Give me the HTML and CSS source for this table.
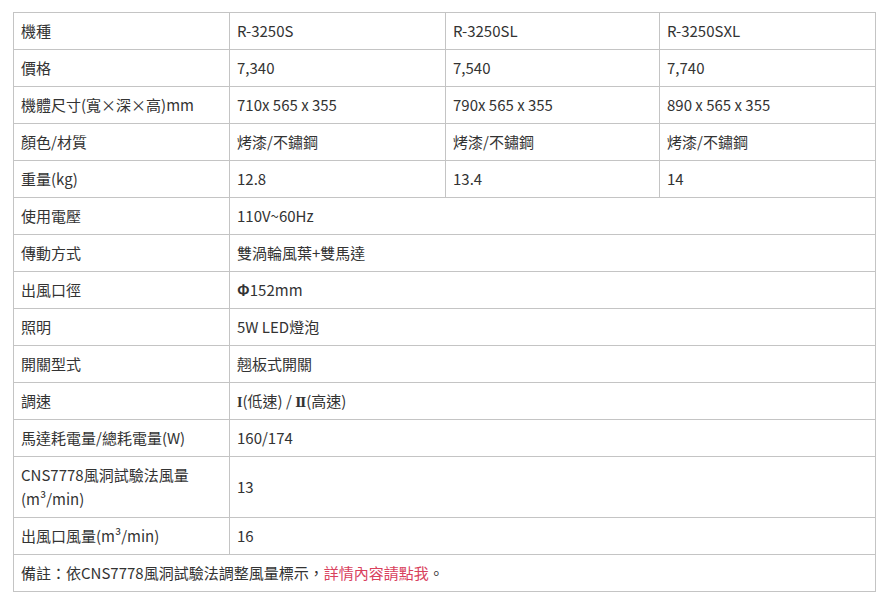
FILE: index.html
```html
<!DOCTYPE html>
<html lang="zh-Hant">
<head>
<meta charset="utf-8">
<link rel="stylesheet" href="styles.css">
</head>
<body>
<table class="spec">
  <colgroup>
    <col class="c1"><col class="c2"><col class="c3"><col class="c4">
  </colgroup>
  <tbody>
    <tr><td>機種</td><td>R-3250S</td><td>R-3250SL</td><td>R-3250SXL</td></tr>
    <tr><td>價格</td><td>7,340</td><td>7,540</td><td>7,740</td></tr>
    <tr><td>機體尺寸(寬×深×高)mm</td><td>710x 565 x 355</td><td>790x 565 x 355</td><td>890 x 565 x 355</td></tr>
    <tr><td>顏色/材質</td><td>烤漆/不鏽鋼</td><td>烤漆/不鏽鋼</td><td>烤漆/不鏽鋼</td></tr>
    <tr><td>重量(kg)</td><td>12.8</td><td>13.4</td><td>14</td></tr>
    <tr><td>使用電壓</td><td colspan="3">110V~60Hz</td></tr>
    <tr><td>傳動方式</td><td colspan="3">雙渦輪風葉+雙馬達</td></tr>
    <tr><td>出風口徑</td><td colspan="3"><b class="phi">Φ</b>152mm</td></tr>
    <tr><td>照明</td><td colspan="3">5W LED燈泡</td></tr>
    <tr><td>開關型式</td><td colspan="3">翹板式開關</td></tr>
    <tr><td>調速</td><td colspan="3"><span class="roman1">I</span>(低速) / <span class="roman2">Ⅱ</span>(高速)</td></tr>
    <tr><td>馬達耗電量/總耗電量(W)</td><td colspan="3">160/174</td></tr>
    <tr><td>CNS7778風洞試驗法風量<br>(m³/min)</td><td colspan="3">13</td></tr>
    <tr><td>出風口風量(m³/min)</td><td colspan="3">16</td></tr>
    <tr><td colspan="4">備註：依CNS7778風洞試驗法調整風量標示，<a class="more" href="#">詳情內容請點我</a>。</td></tr>
  </tbody>
</table>
</body>
</html>
```

FILE: styles.css
```css
html, body {
  margin: 0;
  padding: 0;
  background: #ffffff;
}
body {
  padding: 12px 0 0 13px;
  font-family: "Noto Sans CJK TC", "Noto Sans", sans-serif;
  font-size: 15px;
  line-height: 24px;
  color: #333333;
}
.spec {
  border-collapse: collapse;
  table-layout: fixed;
  width: 863px;
}
.c1 { width: 216px; }
.c2 { width: 216px; }
.c3 { width: 214px; }
.c4 { width: 216px; }
.spec td {
  border: 1px solid #c4c4c4;
  padding: 6px 7px;
  height: 24px;
  line-height: 24px;
  vertical-align: middle;
  text-align: left;
}
.phi {
  font-weight: 700;
  line-height: 0;
}
.roman1 {
  font-family: "Liberation Serif", serif;
  font-weight: 700;
  font-size: 14px;
  line-height: 0;
}
.roman2 {
  font-family: "DejaVu Serif", serif;
  font-weight: 700;
  font-size: 13px;
  line-height: 0;
}
.more {
  color: #d9415d;
  text-decoration: none;
}
```
